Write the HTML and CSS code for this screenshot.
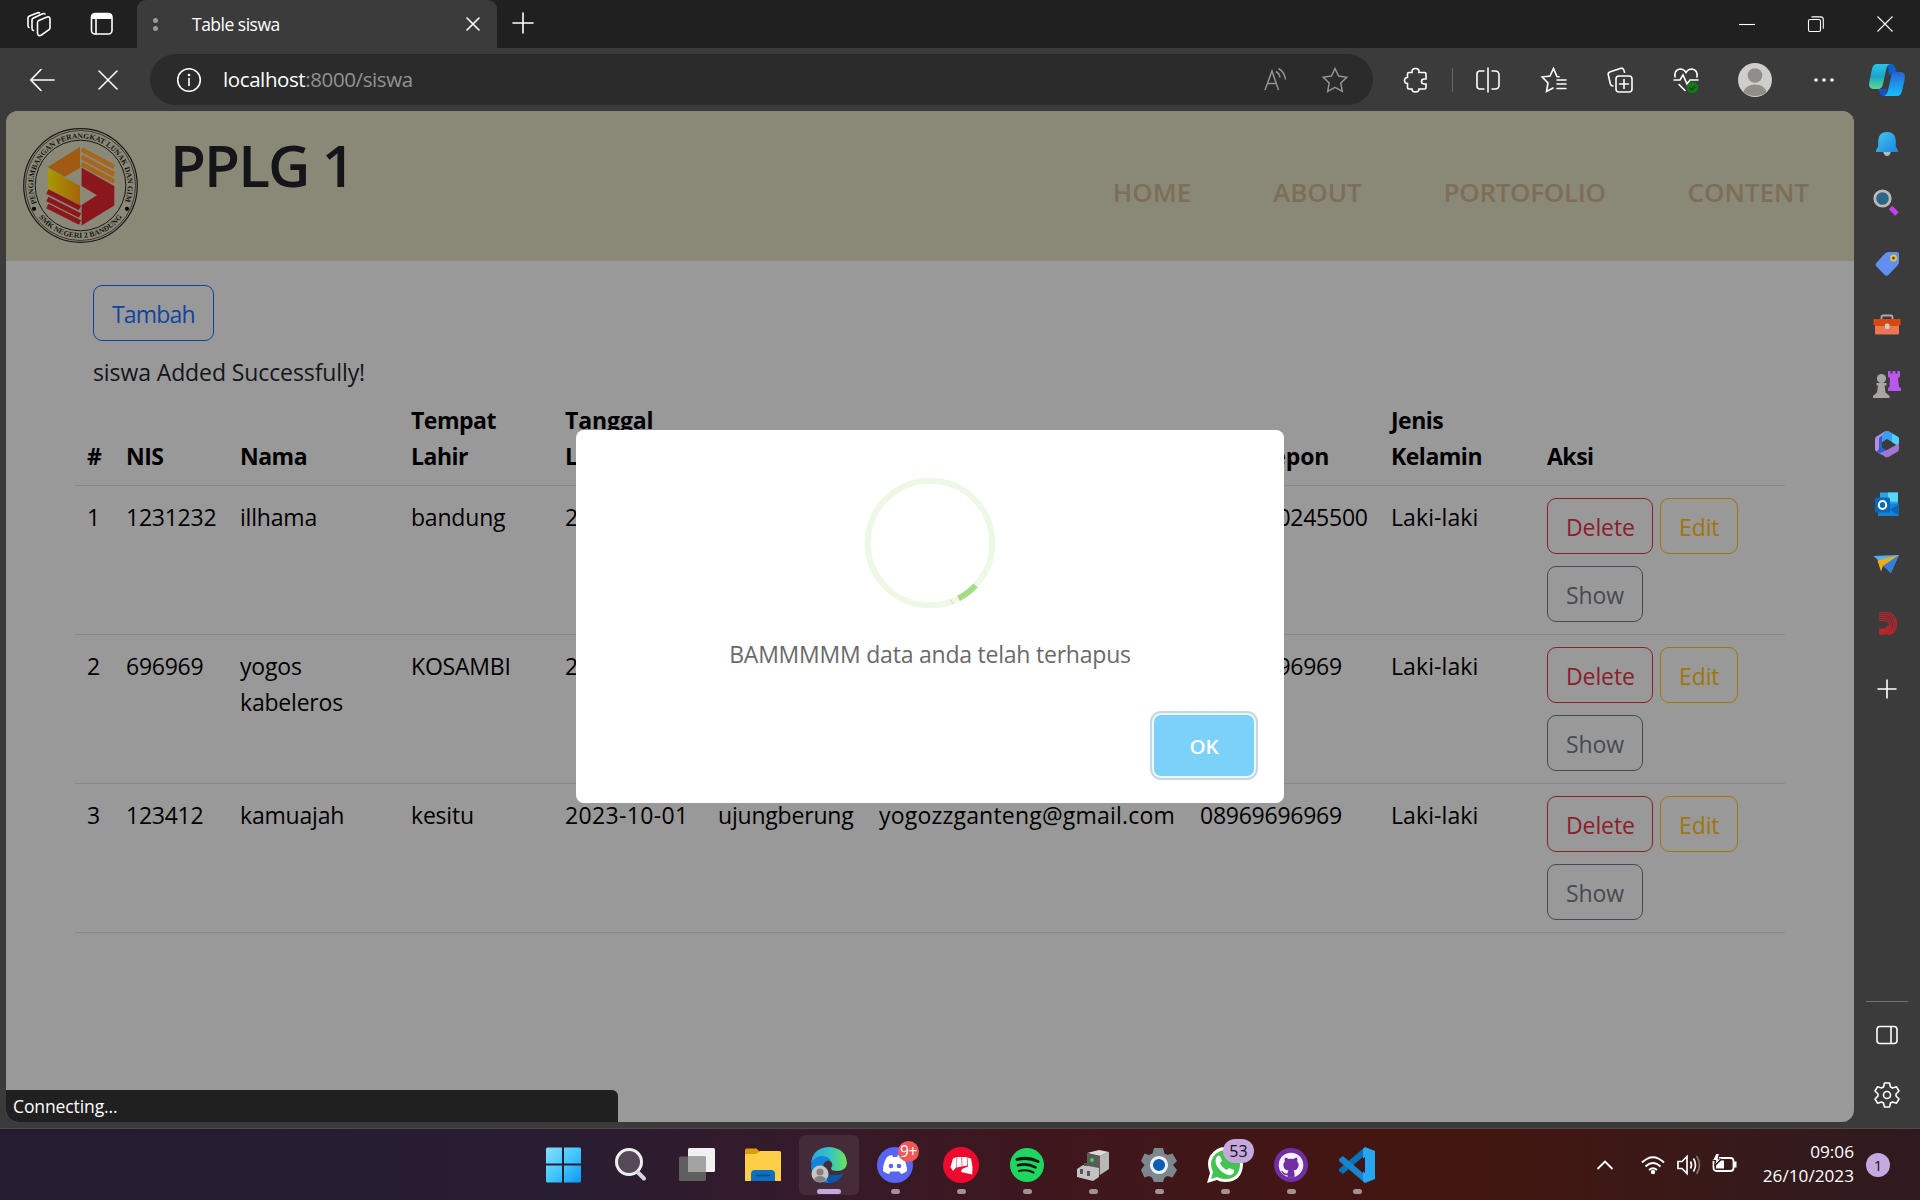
FILE: index.html
```html
<!DOCTYPE html>
<html lang="id">
<head>
<meta charset="utf-8">
<title>Table siswa</title>
<link rel="stylesheet" href="styles.css">
</head>
<body>
<header class="tabbar">
  <div class="tab-tools">
    <svg class="i24" viewBox="0 0 24 24"><g class="ln"><path d="M10.500 10.500q0-1.300 1.300-2l7.700-3.300q3-1 3.500 1.500v9q0 1.300-1 2l-7.500 5.300q-3.500 1.700-4-1.500z"/><path d="M6.500 18.500q-1.500-.5-1.500-2V8q0-1.300 1-1.800L15 2q2-1 3 0"/><path d="M2 15.500q-1-.5-1-2V6q0-1.300 1-1.800L10 1q1.500-.7 2.500 0"/></g></svg>
    <svg class="i24" viewBox="0 0 24 24"><g class="ln"><rect x="1.500" y="1.500" width="20.500" height="20.500" rx="3.500"/><path d="M6 7v15"/></g><path fill="#fff" d="M1.500 7V4.500q0-3 3-3h14.500q3 0 3 3V7z"/></svg>
  </div>
  <div class="tab">
    <span class="tab-dots"><i></i><i></i></span>
    <span class="tab-title">Table siswa</span>
    <svg class="i14" viewBox="0 0 14 14"><path class="ln" d="M1 1l12 12M13 1L1 13"/></svg>
  </div>
  <svg class="new-tab" viewBox="0 0 22 22"><path class="ln" d="M11 1v20M1 11h20"/></svg>
  <div class="win-controls">
    <svg viewBox="0 0 16 16"><path class="hair" d="M0 8.500h16"/></svg>
    <svg viewBox="0 0 16 16"><g class="hair"><rect x=".5" y="3.500" width="12" height="12" rx="1.500"/><path d="M3.500 .9h9q2.800 0 2.800 2.800v9"/></g></svg>
    <svg viewBox="0 0 16 16"><path class="hair" d="M.5 .5l15 15M15.500 .5l-15 15"/></svg>
  </div>
</header>

<nav class="toolbar">
  <svg class="i24" viewBox="0 0 24 24"><path class="ln" d="M24 12H1M11 1.500L.8 12 11 22.500"/></svg>
  <svg class="i20" viewBox="0 0 20 20"><path class="ln" d="M1 1l18 18M19 1L1 19"/></svg>
  <div class="address">
    <svg class="i26" viewBox="0 0 26 26"><circle class="ln" cx="13" cy="13" r="11.300"/><path class="ln" d="M13 11.500v7"/><circle cx="13" cy="8" r="1.300" fill="#fff"/></svg>
    <span class="url">localhost<span>:8000/siswa</span></span>
    <svg class="i26 dim" viewBox="0 0 26 26"><path d="M2 23L9 4l6.500 19M4.500 16.500h8.500M13 4.500q3.500 2 4 6M15.500 1.500q6 3 7 11"/></svg>
    <svg class="i26 dim" viewBox="0 0 26 26"><path d="M13 1.500l3.600 7.600 8.200 1.100-6 5.800 1.500 8.300-7.300-4-7.300 4 1.500-8.300-6-5.800 8.200-1.100z"/></svg>
  </div>
  <svg class="i26" viewBox="-1 0 26 26"><path class="ln" d="M9 5.500q-.5-4 3.500-4t3.500 4h5.500q1.500 0 1.500 1.500v5h-1.500q-3 0-3 2.500t3 2.500h1.500v3.500q0 1.500-1.500 1.500H16q0 3-3.500 3T9 22H6q-1.500 0-1.500-1.500v-4q-3 0-3-3t3-3V7q0-1.500 1.500-1.500z"/></svg>
  <span class="sep"></span>
  <svg class="i26" viewBox="1 0 26 26"><path class="ln" d="M9 4H5Q2 4 2 7v12q0 3 3 3h4M17 4h3q4 0 4 4v10q0 4-4 4h-3M13 1v24"/></svg>
  <svg class="i26" viewBox="0 0 26 26"><path class="ln" d="M18 9.800l-2-.3L12.500 1.500 9 9l-7.800 1 5.800 6-1.500 8.500 6.500-3.500M16 13h9M16 17h9M16 21.500h9"/></svg>
  <svg class="i26" viewBox="0 0 26 26"><g class="ln"><rect x="9" y="9" width="16" height="16" rx="3"/><path d="M17 12.500v9M12.500 17h9M6 19q-2 0-2.600-2L1.300 8q-.6-2.500 2-3.300L14 1.300q2-.6 2.900 2l.6 2"/></g></svg>
  <svg class="i26" viewBox="0 0 26 26"><path class="ln" d="M2 10Q1 3 7 2q4 0 6 3.500Q15 2 19 2q6 1 5 8M1 13h6l3-5 4 9 3-4h8M6 17.500l6 6"/><circle cx="19.500" cy="20.500" r="5.700" fill="#107c10"/><path d="M16.500 20.500l2.200 2.300 3.800-4" fill="none" stroke="#333" stroke-width="1.300"/></svg>
  <svg class="avatar" viewBox="0 0 34 34"><circle cx="17" cy="17" r="17" fill="#d0cecb"/><circle cx="17" cy="12.500" r="7.300" fill="#918d89"/><path d="M5.500 29Q8 21.500 17 21.500T28.500 29Q24 33 17 33T5.500 29z" fill="#918d89"/></svg>
  <svg class="i22" viewBox="0 0 22 22"><g fill="#fff"><circle cx="3" cy="11" r="1.800"/><circle cx="11" cy="11" r="1.800"/><circle cx="19" cy="11" r="1.800"/></g></svg>
  <svg class="copilot" viewBox="1 0 36 34"><defs><linearGradient id="cpa" x2="0" y2="1"><stop stop-color="#2ac3ee"/><stop offset=".5" stop-color="#17a6c8"/><stop offset="1" stop-color="#62d98c"/></linearGradient><linearGradient id="cpb" x2="0" y2="1"><stop stop-color="#2663d6"/><stop offset="1" stop-color="#16c0fa"/></linearGradient></defs><path fill="#0b63c9" d="M19 1h3q3 0 4 3l2 6-8 2z"/><path fill="#1b50c8" d="M9 26h9l-1 7q-4 1-6-3z"/><path fill="url(#cpa)" d="M8 1h13q-3 1-4 6l-3 14q-1 5-5 5H4q-5-1-3.700-7L3 6q1-5 5-5z"/><path fill="url(#cpb)" d="M27 9h5q5 1 3.700 7L33 28q-1 5-5 5H15q3-1 4-6l3-13q1-5 5-5z"/></svg>
</nav>

<div class="middle">
  <main class="page">
    <div class="site-head">
      <svg class="logo" viewBox="0 0 115 115">
        <defs><path id="arcTop" d="M13.700 75.200A47.200 47.200 0 1 1 101.300 75.200"/><path id="arcBot" d="M13.100 85.200A52.300 52.300 0 0 0 101.900 85.200"/>
        <linearGradient id="ye"><stop stop-color="#a79a00"/><stop offset="1" stop-color="#a5630c"/></linearGradient></defs>
        <g fill="none" stroke="#161616"><circle cx="57.500" cy="57.500" r="56.800" stroke-width="1.200"/><circle cx="57.500" cy="57.500" r="55" stroke-width=".7"/><circle cx="57.500" cy="57.500" r="45.300" stroke-width="1"/></g>
        <g class="ring-text"><text><textPath href="#arcTop" textLength="182">PENGEMBANGAN PERANGKAT LUNAK DAN GIM</textPath></text>
        <text><textPath href="#arcBot" textLength="96" startOffset="5">SMK NEGERI 2 BANDUNG</textPath></text></g>
        <circle cx="11" cy="80.800" r="2.100"/><circle cx="104" cy="80.800" r="2.100"/>
        <path fill="#a05a12" d="M57 19v21L41.500 48.700 24.800 39z"/><path fill="url(#ye)" d="M24.800 40L57 58v19L24.800 60.500z"/>
        <path stroke="#a9661a" stroke-width="4.300" fill="none" d="M58.600 21.500L91.300 39M58.600 29L91.300 46.500M58.600 36L91.300 53.500"/>
        <path fill="#8b171c" d="M58.600 39.700L91.300 58v19.500L58.600 97.500V77L74 67.300 58.600 58z"/>
        <path stroke="#8b171c" stroke-width="4.800" fill="none" d="M24.300 63.500L57 80M24.300 71L57 87.500M24.300 78L57 94.500"/>
      </svg>
      <h1>PPLG 1</h1>
      <div class="links"><a>HOME</a><a>ABOUT</a><a class="tight">PORTOFOLIO</a><a>CONTENT</a></div>
    </div>
    <div class="content">
      <a class="btn blue">Tambah</a>
      <p class="flash">siswa Added Successfully!</p>
      <table>
        <colgroup><col class="c1"><col class="c2"><col class="c3"><col class="c4"><col class="c5"><col class="c6"><col class="c7"><col class="c8"><col class="c9"><col class="c10"></colgroup>
        <thead><tr><th>#</th><th>NIS</th><th>Nama</th><th>Tempat<br>Lahir</th><th class="wide">Tanggal<br>Lahir</th><th></th><th></th><th class="wide">No Telepon</th><th>Jenis<br>Kelamin</th><th>Aksi</th></tr></thead>
        <tbody>
        <tr><td>1</td><td class="num">1231232</td><td>illhama</td><td>bandung</td><td class="date">2023-10-01</td><td></td><td></td><td class="num">0896970245500</td><td class="sex">Laki-laki</td><td class="acts"><a class="btn red">Delete</a><a class="btn amber">Edit</a><a class="btn gray">Show</a></td></tr>
        <tr><td>2</td><td class="num">696969</td><td>yogos<br>kabeleros</td><td>KOSAMBI</td><td class="date">2023-10-01</td><td></td><td></td><td class="num">08969696969</td><td class="sex">Laki-laki</td><td class="acts"><a class="btn red">Delete</a><a class="btn amber">Edit</a><a class="btn gray">Show</a></td></tr>
        <tr><td>3</td><td class="num">123412</td><td>kamuajah</td><td>kesitu</td><td class="date">2023-10-01</td><td>ujungberung</td><td class="mail">yogozzganteng@gmail.com</td><td class="num">08969696969</td><td class="sex">Laki-laki</td><td class="acts"><a class="btn red">Delete</a><a class="btn amber">Edit</a><a class="btn gray">Show</a></td></tr>
        </tbody>
      </table>
    </div>
    <div class="modal">
      <svg class="ring" viewBox="0 0 132 132"><circle cx="66" cy="66" r="62.300" fill="none" stroke="#edf8e7" stroke-width="6"/><path d="M111.500 108.500A62.300 62.300 0 0 1 94.500 121.400" fill="none" stroke="#a5dc86" stroke-width="6"/><path d="M85.500 122l4 5" stroke="#c9eab6" stroke-width="1.200"/></svg>
      <p>BAMMMMM data anda telah terhapus</p>
      <button>OK</button>
    </div>
    <div class="status">Connecting...</div>
  </main>
  <aside class="side">
    <svg viewBox="0 0 30 30"><defs><linearGradient id="bl" x2="1" y2="1"><stop stop-color="#43c8f5"/><stop offset="1" stop-color="#1a84dc"/></linearGradient></defs><path fill="#bbb" d="M11 22h8q-1 5-4 5t-4-5z"/><path fill="url(#bl)" d="M15 3q8.500 0 8.800 9v5.500l2.200 4V23H4v-1.500l2.200-4V12Q6.500 3 15 3z"/></svg>
    <svg viewBox="0 -1 30 30"><circle cx="10.500" cy="8.500" r="7.700" fill="#2b678a" stroke="#bcbab8" stroke-width="2.800"/><path d="M18.500 17.500l6.500 6.500" stroke="#c43ff2" stroke-width="5"/></svg>
    <svg viewBox="0 0 30 30"><path fill="#628ff5" d="M16 3h9q2 0 2 2v8q0 2-1.500 3.500l-9 9.300q-2 2-4 0l-8-8.300q-1.800-2 0-3.800L13 4.500Q14.500 3 16 3z"/><circle cx="21.500" cy="9" r="2.500" fill="#3a4b8c" stroke="#f4c81c" stroke-width="2"/></svg>
    <svg viewBox="0 -1 30 30"><path fill="none" stroke="#aaa" stroke-width="1.800" d="M9.500 10V7q0-1.500 1.500-1.500h8q1.500 0 1.500 1.500v3"/><path fill="#ee7452" d="M3 13h24v10q0 1.500-1.500 1.500h-21Q3 24.500 3 23z"/><path fill="#d64712" d="M1.500 9h27v6q-2 1-4 1h-19q-2 0-4-1z"/><rect x="13" y="13.500" width="4.500" height="5.500" rx="1.500" fill="#ccc"/></svg>
    <svg viewBox="1 0 30 30"><path fill="#b957ef" d="M17 2h2.500v2.500h2V2h3v2.500h2V2H29v5.500l-2 2 1 8 2 2V22H17v-2.500l1.500-2 .5-8-2-2z"/><g fill="#a8a6a4"><circle cx="10.500" cy="9.500" r="4.600"/><path d="M5.500 14h10v2.500h-2l1 7 4 3.500v2H2v-2l4-3.500 1-7H5.500z"/></g></svg>
    <svg viewBox="0 -.5 30 30"><path fill="#b88be0" d="M3 9.500Q3 8 4.200 7.200L13 1.800v8.700l-3 2v13L4.200 22Q3 21.200 3 19.800z"/><path fill="#3d9eef" d="M13 1.800q2-1.300 4 0l8.800 5.400Q27 8 27 9.500V17l-7-4.500-5-3-5 3V6z"/><path fill="#4fd0f8" d="M20 4l5.800 3.200Q27 8 27 9.500V17l-7-4.500z"/><path fill="#2c5fc4" d="M10 12.500v5.300L15 21l-5 3.500L4.200 22Q7 21 7 18V8.500L10 6z"/><path fill="#a276d2" d="M8 23.600l7-3.100 5-2.700 7-4v6q0 1.400-1.200 2.200L17 27.200q-2 1.200-4 0z"/><path fill="#3b3b3b" d="M15 10.500l4 2.300v4.500L15 19.500l-4-2.200v-4.500z"/></svg>
    <svg viewBox="0 -.5 30 30"><rect x="8" y="3" width="18" height="18" fill="#2ba3e6"/><path fill="#58d7fa" d="M16 3h10v9H16z"/><path fill="#1583d4" d="M8 14h18l1 1v11.500H6V18z"/><path fill="#0d64b4" d="M27 15v11L18 20z"/><rect x="3" y="8" width="15" height="15" rx="1.500" fill="#0a66ba"/><ellipse cx="10.500" cy="15.500" rx="3.700" ry="4" fill="none" stroke="#fff" stroke-width="2"/></svg>
    <svg viewBox="0 0 30 30"><path fill="#4fb1f3" d="M1.500 7L27 6l-8.500 18-5-6z"/><path fill="#f3ac14" d="M27 6L5.500 11.500 9 22.500l2-5.500z"/><path fill="#367fd9" d="M27 6L11 17l8 7z"/></svg>
    <svg viewBox="0 0 30 30"><path fill="none" stroke="#b5262d" stroke-width="1.200" d="M7 3.600h7.500q10 1 10 11t-8 11M7 5.600h7q9 1 9 9.500t-8 9.900M7 7.600h6.500q8 1 8 8T14 25M7 9.600h6q6.500 1 6.500 6.500T13.500 25M7 11.600h5q6 .5 6 5.500t-6 8"/><path fill="#b5262d" d="M7 19.500h4q4 0 5-4 2 2 1.500 5.500-1 4-6 4.800H7z"/></svg>
    <svg viewBox="0 0 30 30"><path class="ln" d="M15 6v18M6 15h18"/></svg>
    <span class="rule"></span>
    <svg viewBox="0 0 30 30"><g class="ln"><rect x="5" y="6.500" width="20" height="17" rx="3"/><path d="M19 7v16"/></g></svg>
    <svg viewBox="0 0 30 30"><g class="ln"><path stroke-linejoin="round" d="M12.500 3h5l1 4 2 1 4-1.200 2.500 4.200-3 3v2l3 3-2.500 4.200-4-1.200-2 1-1 4h-5l-1-4-2-1-4 1.200L3 19l3-3v-2l-3-3 2.500-4.200 4 1.200 2-1z"/><circle cx="15" cy="15" r="3.500"/></g></svg>
  </aside>
</div>

<footer class="taskbar">
  <div class="apps">
    <div class="app"><svg viewBox="1.500 0 36 36"><defs><linearGradient id="wn" gradientUnits="userSpaceOnUse" x1="0" y1="0" x2="36" y2="36"><stop stop-color="#86e0fd"/><stop offset=".5" stop-color="#45c7fc"/><stop offset="1" stop-color="#0a95f8"/></linearGradient></defs><path fill="url(#wn)" d="M2 .5h14.500v16H.5V2Q.5.5 2 .5zM18.500.5H34q1.500 0 1.500 1.500v14.500h-17zM.5 18.500h16v17H2Q.5 35.500.5 34zM18.500 18.500h17V34q0 1.500-1.500 1.500H18.500z"/></svg></div>
    <div class="app"><svg viewBox="1 0 36 36"><circle cx="17" cy="15" r="12.500" fill="#564858" stroke="#eee" stroke-width="3"/><path d="M25.500 25l6.500 6.500" stroke="#d6d6da" stroke-width="4" stroke-linecap="round"/></svg></div>
    <div class="app"><svg viewBox="0 0 36 36"><rect x="9" y="1" width="27" height="24" rx="1.500" fill="#f1f0f1"/><rect x="0" y="9.500" width="27" height="24.500" rx="1.500" fill="#5f5f5f"/><path fill="#a3a2a3" d="M9 9.500h18V25H9z"/></svg></div>
    <div class="app"><svg viewBox="0 0 36 36"><path fill="#dd9b06" d="M0 3q0-1.500 1.500-1.500h10L15 5v5H0z"/><path fill="#fdcf48" d="M0 7h11l4-3h19.500Q36 4 36 5.500V34H0z"/><path fill="#0e6fc0" d="M6 34V27q0-4 4-4h16q4 0 4 4v7z"/><path d="M11 28.500h14" stroke="#084a86" stroke-width="1.500"/></svg></div>
    <div class="app active"><svg viewBox="0 0 36 36"><defs><linearGradient id="ed"><stop stop-color="#26a9e0"/><stop offset=".5" stop-color="#35c1c6"/><stop offset="1" stop-color="#67e456"/></linearGradient></defs><path fill="#0d55a5" d="M12 14q-3 15 12 14 5 0 9-2-5 10-15 10Q1 35 0 19z"/><path fill="#1483d8" d="M0 19Q2 7 13 8q8 1 8 8-4-5-8 0-4 8 5 20Q2 35 0 19z"/><path fill="url(#ed)" d="M0 17Q1 1 18 0q17 1 18 16-1 8-10 8-6 0-6-3 2-2 1-5Q18 8 10 9 3 10 0 17z"/><circle cx="9" cy="27" r="8.500" fill="#c8c6c4"/><circle cx="9" cy="25" r="3.600" fill="#85817e"/><path fill="#85817e" d="M3 32q2-3 6-3t6 3q-2 3-6 3t-6-3z"/></svg><i></i></div>
    <div class="app run"><svg viewBox="0 0 36 36"><circle cx="18" cy="18" r="18" fill="#5865f2"/><path fill="#fff" d="M10 10q3-2 5-2l1 2h4l1-2q2 0 5 2 4 7 4 14-3 2.500-6 3l-1.500-2.500h-9L12 27q-3-.5-6-3 0-8 4-14z"/><circle cx="14" cy="19" r="2.300" fill="#5865f2"/><circle cx="22" cy="19" r="2.300" fill="#5865f2"/></svg><i></i><span class="badge hot">9+</span></div>
    <div class="app run"><svg viewBox="0 0 36 36"><circle cx="18" cy="18" r="18" fill="#ee0a2e"/><path fill="#fff" d="M10 11.500l3.600-1.500-.1 10-3.500 4-2.500-4zM14.200 10h4.300l.2 9.500-4.800 1zM19.100 10h4.600l.6 8.500-5 1zM24.300 10.500l3.700 1 1.500 8.500-.3 7.500-11.200-2.500 1-3 6-2.500z"/></svg><i></i></div>
    <div class="app run"><svg viewBox="0 0 36 36"><circle cx="18" cy="18" r="17" fill="#1ed760"/><g fill="none" stroke="#191414" stroke-linecap="round"><path stroke-width="3" d="M8 12.500q11-3 21 2"/><path stroke-width="2.600" d="M9 18.300q9-2.500 17.500 2"/><path stroke-width="2.200" d="M10 24q8-2 14.500 1.500"/></g></svg><i></i></div>
    <div class="app run"><svg viewBox="0 0 36 36"><path fill="#dcdad9" d="M12 6l12-3 10 2-9 4z"/><path fill="#5b5b5b" d="M12 6l13 3v19l-13-3z"/><path fill="#b9b7b6" d="M25 9l9-4v17l-9 6z"/><circle cx="17" cy="13" r="2" fill="#38e048"/><path fill="#c3c1c2" d="M2 22l6-4 16 3v9l-6 4-16-4z"/><path fill="#56565a" d="M5 22h3v5H5zM12 24h3v5h-3zM9 16h7v3H9z"/></svg><i></i></div>
    <div class="app run"><svg viewBox="0 0 36 36"><path fill="#7d8790" d="M13 1h9l1.500 5.500 3 1.500 5-1.500L36 14l-4 4 4 5-4.500 7.500-5-1.500-3 1.500L22 35h-9l-2-4.500L8 29l-4.500 1.500L0 23l3.500-5L0 14l3.500-7.500L8 8l3.500-1.500z"/><circle cx="18" cy="18" r="7.600" fill="#0a5fb4" stroke="#f1f1f1" stroke-width="3"/></svg><i></i></div>
    <div class="app run"><svg viewBox="0 0 36 36"><path fill="#fff" d="M0 36l3-10Q-1 16 3 9 9 0 18 0q18 1 18 18-1 17-18 17-5 0-8-2z"/><path fill="#43c351" d="M4 32l2-7Q2 17 6 10q4-6 12-7 14 1 15 15-1 14-15 14-4 0-8-2z"/><path fill="#fff" d="M9 11q3-5 5 0l1 3-2 2q2 5 7 7l2-2 5 2q1 3-3 5-5 1-11-5T9 11z"/></svg><i></i><span class="badge pill">53</span></div>
    <div class="app run"><svg viewBox="0 0 36 36"><circle cx="18" cy="18" r="17" fill="#7030a4"/><circle cx="18" cy="18" r="12.300" fill="#f6f0fa"/><path fill="#7030a4" d="M12 10.500q2 0 3.500 1.500 2.500-.7 5 0Q22 10.500 24 10.500q.8 2 .2 3.800Q26 16.500 25.500 19q-.8 4-5 4.600 1 1 1 2.800v4.200h-7V28q-4 .8-5.500-2.500-.5-1-1.500-1.700 2-.3 3.200 1.500 1.500 2 3.800 1 0-1.700 1-2.700-4.500-.6-5-4.600-.5-2.500 1.300-4.700-.6-1.800.2-3.800z"/></svg><i></i></div>
    <div class="app run"><svg viewBox="0 0 36 36"><path fill="#0b70b5" d="M26 0l-1 9L4 27l-4-3v-2z"/><path fill="#1685d0" d="M26 36l-1-9L4 9l-4 3v2z"/><path fill="#27a6f1" d="M26 0l10 4v28l-10 4-2-2V2z"/><path fill="#3d1716" d="M26 10v16l-10-8z"/></svg><i></i></div>
  </div>
  <div class="tray">
    <svg class="chev" viewBox="0 0 18 10"><path d="M1.500 9L9 1.500 16.500 9" fill="none" stroke="#fff" stroke-width="1.900"/></svg>
    <svg class="wifi" viewBox="0 0 24 20"><g fill="none" stroke="#fff" stroke-width="1.900"><path d="M1 7.500Q12-3 23 7.500M4.500 11.500q7.500-7 15 0M8 15q4-3.500 8 0"/></g><circle cx="12" cy="17" r="2.200" fill="#fff"/></svg>
    <svg class="vol" viewBox="0 0 24 20"><path fill="none" stroke="#fff" stroke-width="1.700" d="M1 6.500h4l5-5v17l-5-5H1zM13.500 6.500q2 3.500 0 7M16.500 3.500q4 6.500 0 13"/><path fill="none" stroke="#826d6b" stroke-width="1.700" d="M19.500 1q6 9 0 18"/></svg>
    <svg class="bat" viewBox="0 2.500 25 22"><rect x="1.500" y="6.500" width="20" height="13" rx="3" fill="none" stroke="#fff" stroke-width="1.800"/><path fill="#fff" d="M22 10h2.500v6H22zM12 9v8H4v-3l5-5z"/><path fill="#fff" stroke="#351918" stroke-width="1" d="M4 2L.5 9H4l-1.500 5L9 7.500H6L7.500 2z"/></svg>
    <div class="clock"><span>09:06</span><span>26/10/2023</span></div>
    <span class="count">1</span>
  </div>
</footer>
</body>
</html>
```
FILE: styles.css
```css
* { box-sizing: border-box; }
body {
  margin: 0;
  width: 1920px;
  height: 1200px;
  overflow: hidden;
  display: flex;
  flex-direction: column;
  background: #3b3b3b;
  color: #fff;
  font-family: "Open Sans", "Noto Sans", sans-serif;
}
svg { display: block; flex: none; overflow: visible; }
.ln { fill: none; stroke: #fff; stroke-width: 1.6; stroke-linecap: round; }
.hair { fill: none; stroke: #fff; stroke-width: 1.1; }
.i14 { width: 14px; height: 14px; }
.i20 { width: 20px; height: 20px; }
.i22 { width: 22px; height: 22px; }
.i24 { width: 24px; height: 24px; }
.i26 { width: 26px; height: 26px; }

/* tab strip */
.tabbar { height: 48px; flex: none; display: flex; align-items: center; background: #202020; }
.tab-tools { width: 137px; height: 48px; display: flex; align-items: center; gap: 39px; padding-left: 27px; }
.tab {
  width: 360px; height: 48px;
  display: flex; align-items: center;
  padding: 0 17px 0 16px;
  background: #3b3b3b;
  border-radius: 9px 9px 0 0;
}
.tab-dots { display: flex; flex-direction: column; gap: 3px; width: 39px; }
.tab-dots i { width: 5px; height: 5px; border-radius: 50%; background: #9a9a9a; }
.tab-title { flex: 1; padding-bottom: 1px; font-size: 17.500px; letter-spacing: -0.5px; line-height: 24px; }
.new-tab { width: 22px; height: 22px; margin: 0 0 2px 15px; }
.win-controls { margin-left: auto; display: flex; gap: 53px; padding-right: 27px; }
.win-controls svg { width: 16px; height: 16px; }

/* address row */
.toolbar {
  height: 63px; flex: none;
  display: grid;
  grid-template-columns: 84px 48px 18px 1223px 9px 66px 8px 65px 66px 66px 66px 71px 67px 61px;
  align-items: center; justify-items: center;
}
.address {
  grid-column: 4;
  width: 100%; height: 51px;
  display: flex; align-items: center;
  padding: 0 25px 0 26px;
  border-radius: 26px;
  background: #2b2b2b;
}
.address + svg { grid-column: 6; }
.url { flex: 1; padding: 0 0 2px 21px; font-size: 20.500px; letter-spacing: -0.4px; line-height: 30px; }
.url span { color: #929292; }
.dim { fill: none; stroke: #949494; stroke-width: 1.5; margin-left: 33px; }
.url + .dim { margin-left: 0; }
.sep { width: 1px; height: 24px; background: #666; }
.avatar { width: 34px; height: 34px; }
.copilot { width: 36px; height: 34px; }

/* viewport and sidebar */
.middle { height: 1017px; flex: none; display: flex; }
.page {
  position: relative;
  width: 1848px; height: 1011px;
  margin-left: 6px;
  border-radius: 12px;
  overflow: hidden;
  background: #999;
  color: #131518;
}
.site-head { height: 150px; display: flex; align-items: flex-start; background: #8a8877; }
.logo { width: 115px; height: 115px; margin: 17px 0 0 17px; }
.ring-text { font: 700 7.600px "Liberation Serif", serif; fill: #161616; }
h1 { margin: 17px 0 0 32px; font-size: 58.500px; line-height: 72px; font-weight: 600; letter-spacing: -1.900px; }
.links { margin-left: auto; padding: 61px 45px 0 0; display: flex; gap: 81.800px; font-size: 26px; line-height: 40px; font-weight: 600; color: #7d6e58; }
.tight { letter-spacing: -0.3px; }

.content { padding: 24px 69px 0 69px; font-size: 23px; line-height: 36px; }
.btn {
  display: inline-block;
  height: 56px;
  padding: 10px 18px 0;
  border: 1px solid;
  border-radius: 9px;
  line-height: 36px;
  letter-spacing: -0.1px;
}
.blue { color: #0f45a0; display: block; width: 121px; margin-left: 18px; letter-spacing: -0.8px; }
.flash { margin: 13px 0 1px 18px; letter-spacing: -0.1px; }
.red { color: #8a202b; }
.amber { color: #9f7607; }
.gray { color: #454b50; }
table { width: 1710px; table-layout: fixed; border-collapse: collapse; color: #000; }
th, td { padding: 13px 12px 11px; text-align: left; vertical-align: top; border-bottom: 1px solid #868788; white-space: nowrap; letter-spacing: -0.2px; }
th { vertical-align: bottom; padding: 11px 12px; letter-spacing: -0.5px; }
th.wide { letter-spacing: -0.1px; }
td { height: 149px; }
td.num { letter-spacing: -0.25px; }
td.date { letter-spacing: 0.35px; }
td.mail { letter-spacing: 0.2px; }
td.sex { letter-spacing: 0.1px; }
.c1 { width: 39px; } .c2 { width: 114px; } .c3 { width: 171px; } .c4 { width: 154px; } .c5 { width: 153px; }
.c6 { width: 161px; } .c7 { width: 321px; } .c8 { width: 191px; } .c9 { width: 156px; } .c10 { width: 250px; }
td.acts { padding-top: 12px; line-height: 0; white-space: normal; }
.acts .btn { margin: 0 7px 12px 0; vertical-align: top; }
.acts .red { width: 106px; } .acts .amber { width: 78px; } .acts .gray { width: 96px; margin-bottom: 0; }

/* alert over the page */
.modal {
  position: absolute; left: 570px; top: 319px;
  width: 708px; height: 373px;
  display: flex; flex-direction: column; align-items: center;
  padding-top: 47px;
  border-radius: 8px;
  background: #fff;
}
.ring { width: 132px; height: 132px; }
.modal p { margin: 27px 0 0; font-size: 23px; letter-spacing: -0.22px; line-height: 36px; color: #6a6a6a; }
.modal button {
  align-self: flex-end;
  width: 100px; height: 61px;
  margin: 43px 30px 0 0; padding: 0;
  border: 0; border-radius: 7px;
  background: #7cd1f9; color: #fff;
  font: 600 20.500px "Open Sans", sans-serif;
  box-shadow: 0 0 0 2px #f0f7fc, 0 0 0 4px #c2d7e8;
}
.status {
  position: absolute; left: 0; bottom: 0;
  width: 612px; height: 32px;
  padding-left: 7px;
  border-radius: 0 6px 0 0;
  background: #202020; color: #fff;
  font-size: 17.500px; letter-spacing: -0.1px; line-height: 32px;
}

.side { width: 66px; display: flex; flex-direction: column; align-items: center; padding-top: 3px; }
.side svg { width: 30px; height: 30px; margin: 15px 0; }
.side svg:nth-of-type(10) { margin-top: 20px; }
.rule { width: 42px; height: 1px; margin: 282px 0 3px; background: #757575; }

/* taskbar */
.taskbar {
  height: 72px; flex: none;
  display: flex; align-items: center; justify-content: space-between;
  padding-left: 532px;
  border-top: 1px solid #57434a;
  background: linear-gradient(90deg, #251c31 0, #281d32 28%, #351a2a 42%, #3e171e 54%, #431611 72%, #401712 81%, #351a1b 92%, #2e1a1f 100%);
}
.apps { display: flex; }
.app { position: relative; width: 66px; height: 60px; display: flex; justify-content: center; padding-top: 12px; }
.app svg { width: 36px; height: 36px; }
.active::before { content: ""; position: absolute; inset: 0 3px; border-radius: 6px; background: #ffffff14; }
.active svg { position: relative; }
.app i { position: absolute; left: 28.500px; bottom: 1px; width: 9px; height: 5px; border-radius: 3px; background: #a39294; }
.active i { left: 21px; width: 24px; background: #c5a9de; }
.badge { position: absolute; color: #fff; text-align: center; }
.hot { left: 36px; top: 6px; width: 21px; height: 21px; border-radius: 50%; background: #ee5858; font-size: 15.500px; letter-spacing: -0.3px; line-height: 20px; }
.pill { left: 31px; top: 4px; width: 31px; height: 24px; border-radius: 12px; background: #c5a9de; color: #111; font-size: 16px; line-height: 24px; }
.tray { display: flex; align-items: center; padding-right: 30px; }
.chev { width: 18px; height: 10px; margin-right: 27px; }
.wifi { width: 24px; height: 20px; margin-right: 12px; }
.vol { width: 24px; height: 20px; margin-right: 11px; }
.bat { width: 25px; height: 22px; }
.clock { width: 117px; display: flex; flex-direction: column; align-items: flex-end; padding-bottom: 2px; font-size: 17.200px; line-height: 24px; }
.count { width: 24px; height: 24px; margin-left: 12px; border-radius: 50%; background: #c5a9de; color: #111; font-size: 15px; line-height: 24px; text-align: center; }
```
